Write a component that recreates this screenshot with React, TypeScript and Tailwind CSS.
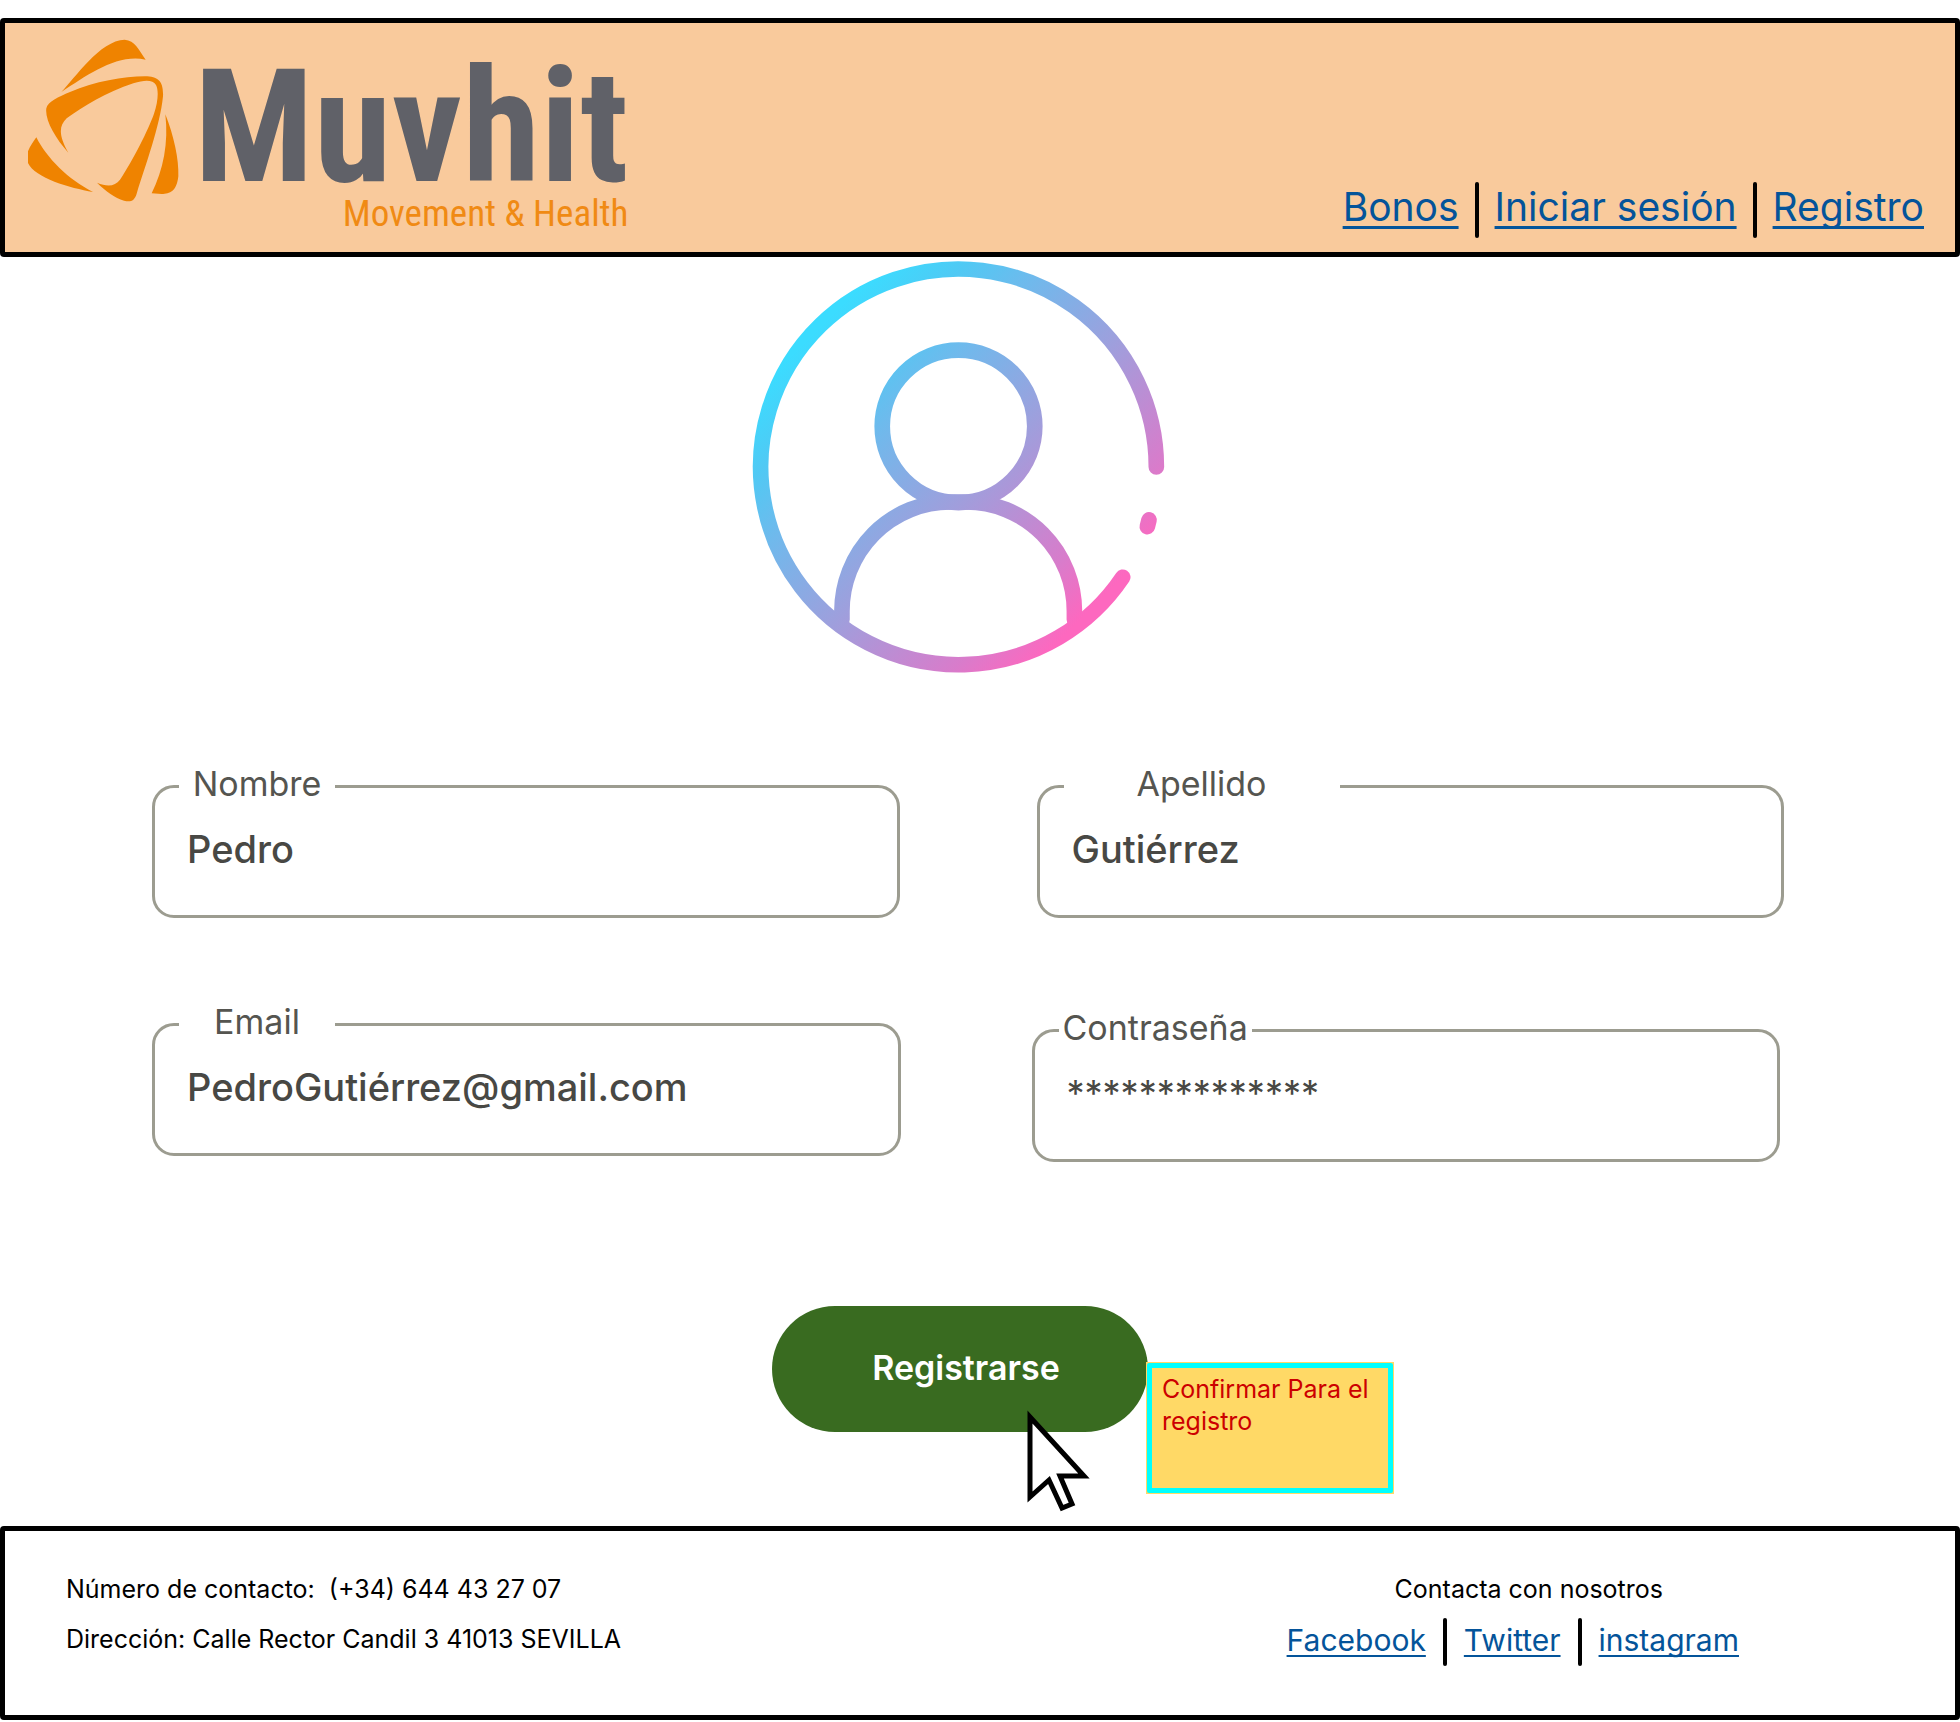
import { Fragment } from "react";

function Emblem() {
  return (
    <svg
      viewBox="24 28 453 489"
      className="mt-4 h-[163px] w-[151px] shrink-0"
      fill="#ef8300"
      aria-hidden="true"
    >
      <path d="M124 187C165 145 240 32 314 30C345 32 356 60 377 90C290 72 205 135 124 187Z" />
      <path d="M145 369C105 325 74 270 79 236C84 215 115 202 150 187C225 155 310 141 375 140C415 141 431 155 429 200C420 290 375 410 350 492C343 514 332 518 312 513C285 505 255 483 231 459C262 472 285 470 300 450C340 390 385 300 402 252C415 215 416 180 408 166C398 150 375 150 340 161C260 187 190 230 140 266C115 290 117 320 145 369Z" />
      <path d="M49 323C80 385 145 450 219 487C150 475 45 445 24 400V365C30 350 40 336 49 323Z" />
      <path d="M436 254C462 320 477 390 475 440C470 485 450 493 425 493L395 491C430 420 446 340 436 254Z" />
    </svg>
  );
}

function Avatar() {
  return (
    <svg viewBox="62 31 1246 1242" className="h-[414px] w-[415px]" fill="none" aria-hidden="true">
      <defs>
        <linearGradient id="avatar" gradientUnits="userSpaceOnUse" x1="250" y1="250" x2="1080" y2="1080">
          <stop offset="0" stopColor="#3bdcff" />
          <stop offset="0.15" stopColor="#50c9f4" />
          <stop offset="0.3" stopColor="#70b9ec" />
          <stop offset="0.57" stopColor="#a09edc" />
          <stop offset="0.86" stopColor="#d87ccb" />
          <stop offset="1" stopColor="#fd68bf" />
        </linearGradient>
      </defs>
      <g stroke="url(#avatar)" strokeWidth="47" strokeLinecap="round">
        <path d="M1279 652A594 594 0 1 0 1178 983" />
        <path d="M1257 811L1252 831" />
        <circle cx="685" cy="530" r="229" />
        <path d="M335 1110V1085A325 328 0 0 1 660 757H708A325 328 0 0 1 1033 1085V1110" />
      </g>
    </svg>
  );
}

function LinkRow({ links, size }: { links: string[]; size: "lg" | "sm" }) {
  const lg = size === "lg";
  return (
    <nav className={lg ? "flex items-center gap-4" : "flex items-center gap-[17px]"}>
      {links.map((link, i) => (
        <Fragment key={link}>
          {i > 0 && <span className={lg ? "h-14 w-1 rounded-full bg-black" : "h-12 w-1 rounded-full bg-black"} />}
          <a
            href="#"
            className={
              lg
                ? "pb-1.5 text-[39px] leading-[44px] text-[#04549a] underline decoration-[3px] underline-offset-[5px] [text-decoration-skip-ink:none]"
                : "pb-1 text-[30px] leading-[36px] text-[#04549a] underline decoration-2 underline-offset-4 [text-decoration-skip-ink:none]"
            }
          >
            {link}
          </a>
        </Fragment>
      ))}
    </nav>
  );
}

function Field({
  id,
  label,
  value,
  labelClass,
  inputClass = "text-[38px] font-medium",
  className = "",
}: {
  id: string;
  label: string;
  value: string;
  labelClass: string;
  inputClass?: string;
  className?: string;
}) {
  return (
    <fieldset
      className={`min-w-0 flex-1 rounded-[22px] border-[3px] border-[#9c9c90] pr-6 pb-[42px] pl-6 ${className}`}
    >
      <legend className="pb-1 text-[34px] leading-[36px] text-[#555550]">
        <label htmlFor={id} className={`block text-center ${labelClass}`}>
          {label}
        </label>
      </legend>
      <input
        id={id}
        type="text"
        defaultValue={value}
        className={`mt-[19px] block h-12 w-full bg-transparent pl-2 leading-[48px] text-[#484844] outline-none ${inputClass}`}
      />
    </fieldset>
  );
}

export default function App() {
  return (
    <div className="bg-white pt-[18px] pb-0.5 font-['Inter',sans-serif] text-black">
      <header className="flex items-end justify-between rounded-sm border-[5px] border-black bg-[#f9ca9c] pr-[31px] pl-[23px]">
        <div className="flex gap-[15px] pb-[18px]">
          <Emblem />
          <div className="flex flex-col items-end pt-11 font-['Roboto_Condensed','Roboto',sans-serif]">
            <span className="text-[158px] leading-[120px] font-bold text-[#606168]">Muvhit</span>
            <span className="mt-[7px] text-[37px] leading-[40px] text-[#f08a14]">Movement &amp; Health</span>
          </div>
        </div>
        <div className="pb-3.5">
          <LinkRow size="lg" links={["Bonos", "Iniciar sesión", "Registro"]} />
        </div>
      </header>

      <main>
        <div className="flex justify-center pt-[3px] pr-11">
          <Avatar />
        </div>

        <form className="mt-[92px]" onSubmit={(e) => e.preventDefault()}>
          <div className="flex gap-[137px] pr-44 pl-[152px]">
            <Field id="nombre" label="Nombre" value="Pedro" labelClass="w-[156px]" />
            <Field id="apellido" label="Apellido" value="Gutiérrez" labelClass="w-[276px]" />
          </div>
          <div className="mt-[86px] flex gap-[131px] pr-[180px] pl-[152px]">
            <Field
              id="email"
              label="Email"
              value="PedroGutiérrez@gmail.com"
              labelClass="w-[156px]"
              className="mb-1.5"
            />
            <Field
              id="contrasena"
              label="Contraseña"
              value="**************"
              labelClass="px-1"
              inputClass="text-[36px]"
              className="mt-1.5"
            />
          </div>

          <div className="mt-36 flex justify-center pr-10">
            <div className="relative">
              <button
                type="submit"
                className="block h-[126px] w-[376px] rounded-full bg-[#396b20] pb-1 pl-3 text-[34px] font-semibold text-white"
              >
                Registrarse
              </button>
              <div className="absolute top-14 left-[374px] w-[248px] bg-[#ffd966] p-px">
                <p className="h-[130px] rounded-xs border-[5px] border-[#00ffff] pt-[5px] pl-2.5 text-[25px] leading-[32px] text-[#cc0000]">
                  Confirmar Para el registro
                </p>
              </div>
              <svg
                viewBox="1025 1408 68 106"
                className="absolute top-[102px] left-[253px] h-[106px] w-[68px]"
                fill="white"
                stroke="black"
                strokeWidth="5"
                aria-hidden="true"
              >
                <path d="M1030 1417L1084 1476H1060L1072 1504L1062 1508L1049 1480L1030 1497Z" />
              </svg>
            </div>
          </div>
        </form>
      </main>

      <footer className="mt-[94px] flex justify-between rounded-sm border-[5px] border-black pt-[33px] pr-[216px] pb-[49px] pl-[61px]">
        <address className="text-[25px] leading-[50px] not-italic">
          <p className="flex gap-3.5">
            <span>Número de contacto:</span>
            <span>(+34) 644 43 27 07</span>
          </p>
          <p>Dirección: Calle Rector Candil 3 41013 SEVILLA</p>
        </address>
        <div>
          <p className="mb-1 pl-8 text-center text-[25px] leading-[50px]">Contacta con nosotros</p>
          <LinkRow size="sm" links={["Facebook", "Twitter", "instagram"]} />
        </div>
      </footer>
    </div>
  );
}
